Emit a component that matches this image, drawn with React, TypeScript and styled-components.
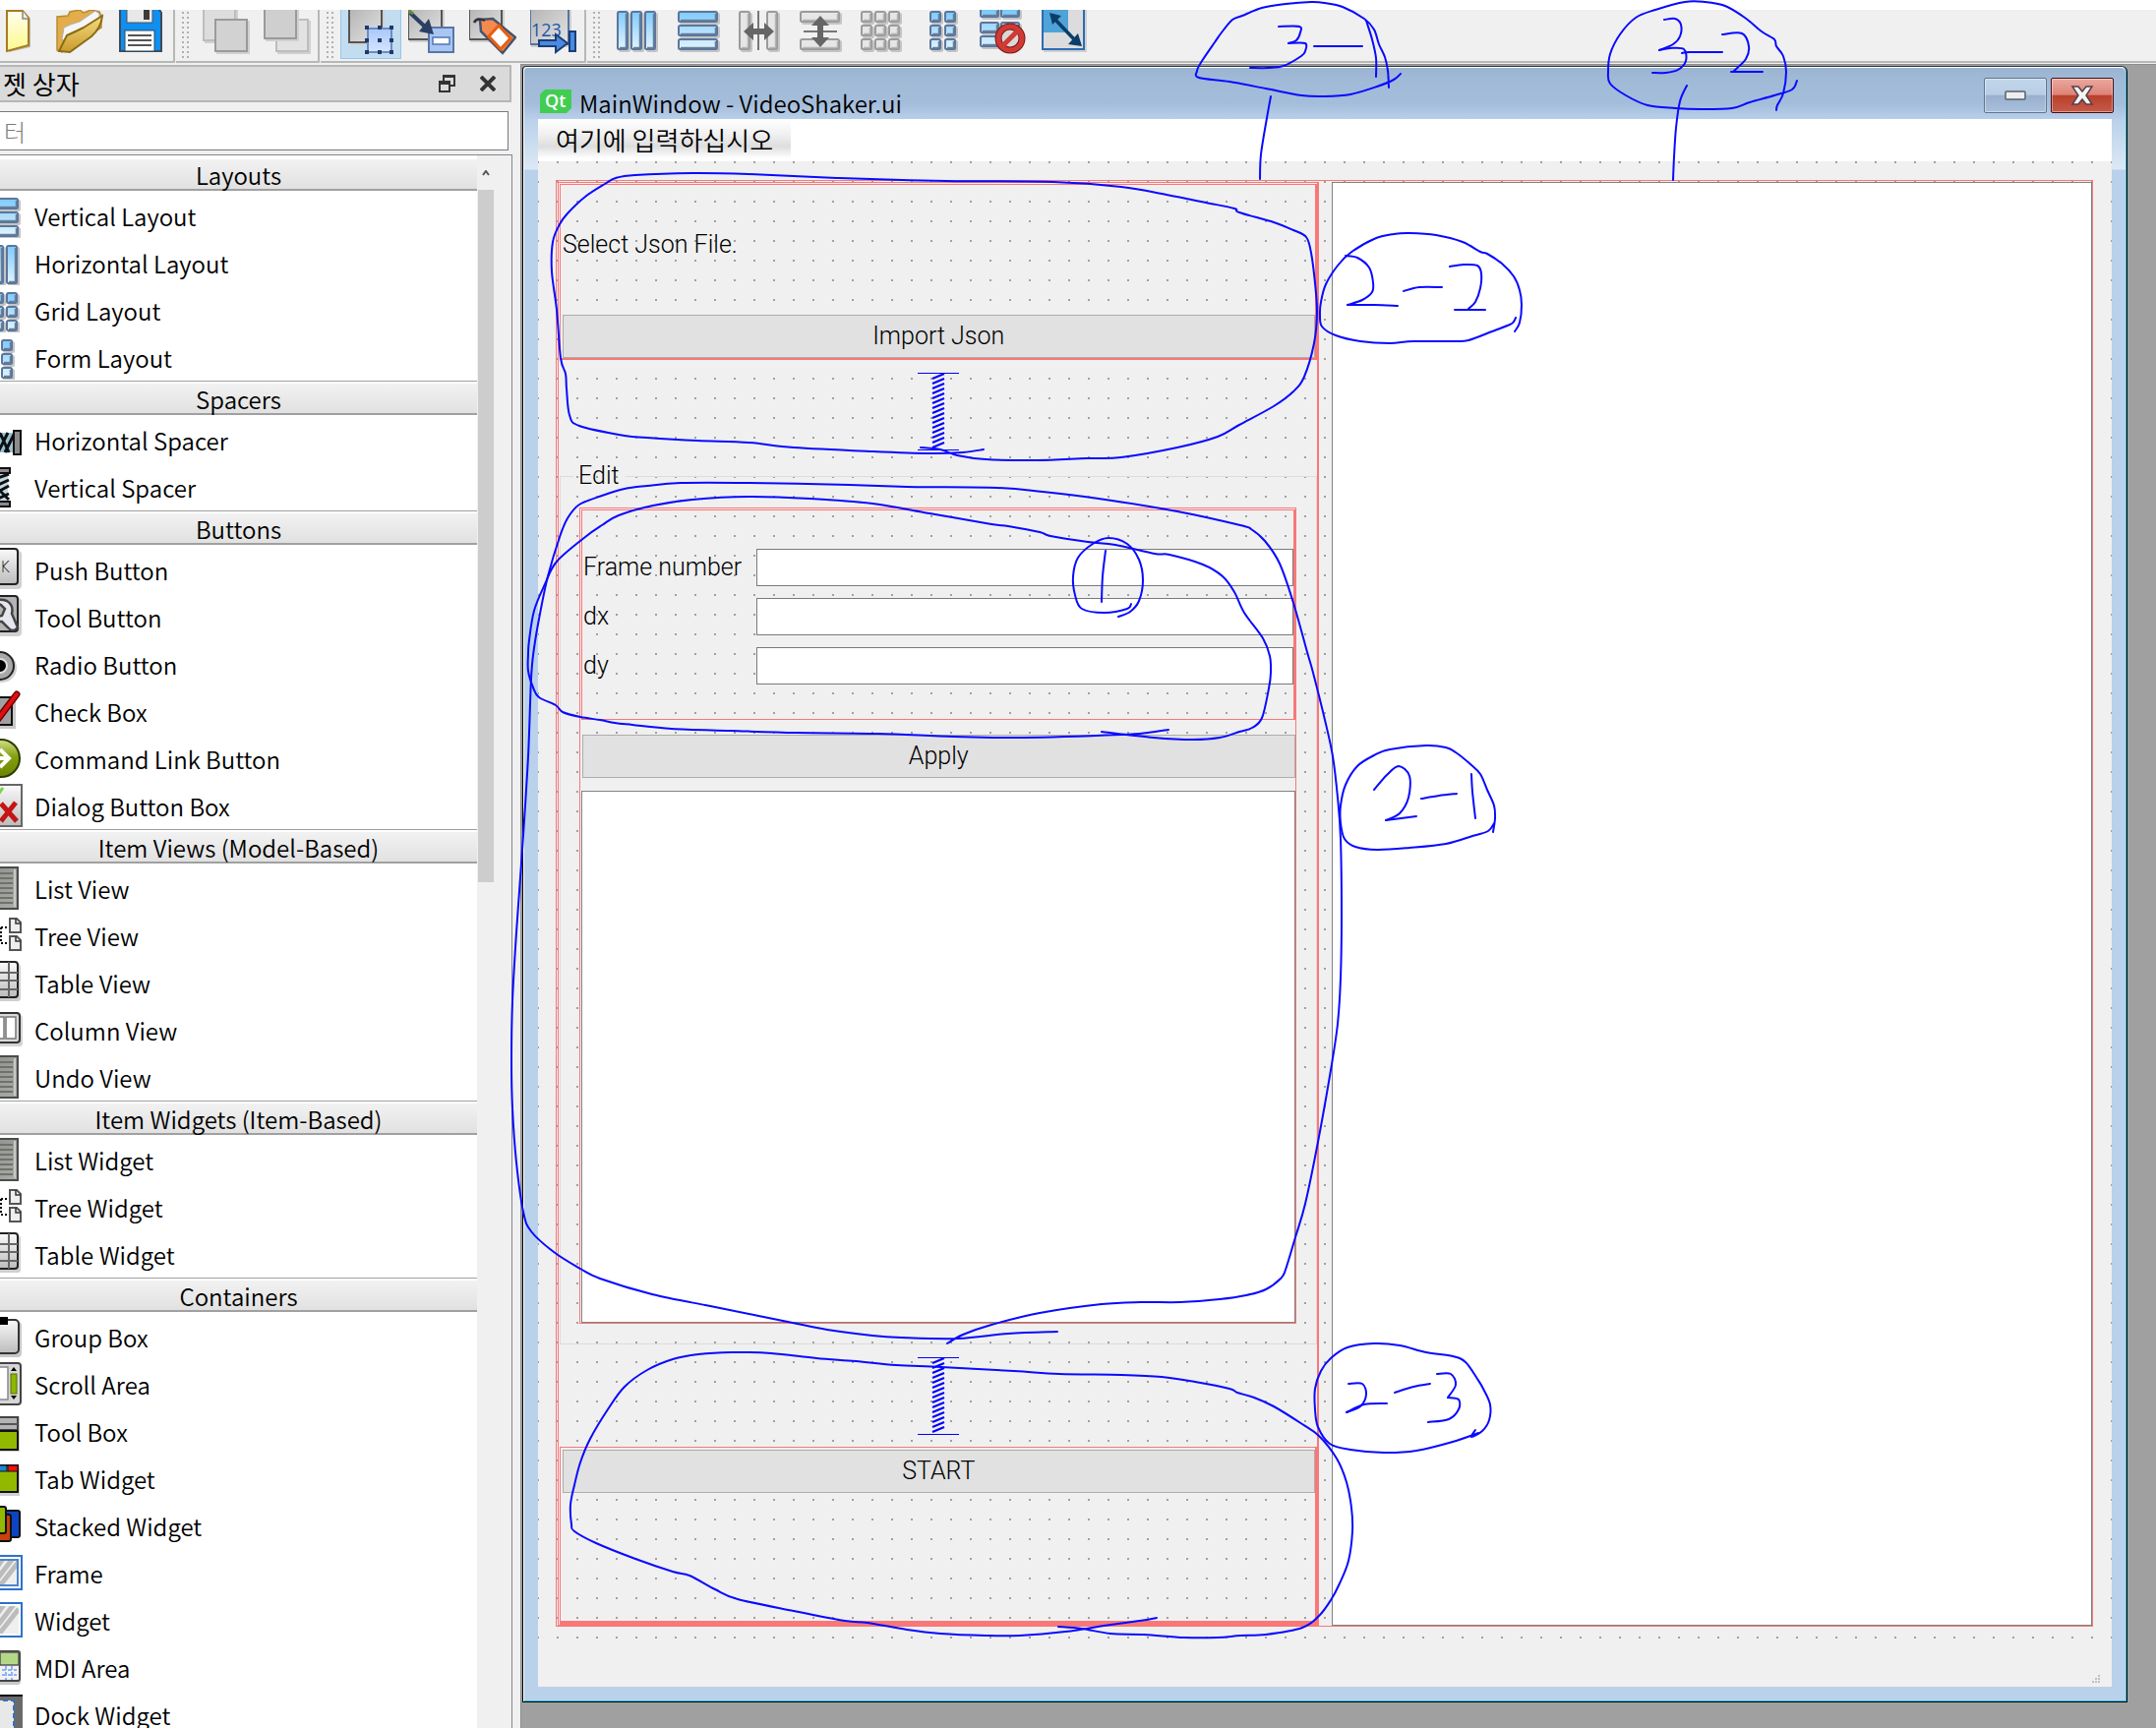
import React from "react";
import styled, { createGlobalStyle, css } from "styled-components";

const uiFont = '"Noto Sans CJK KR", "Noto Sans", sans-serif';
const formFont = 'Roboto, "Noto Sans CJK KR", sans-serif';
const guide = "#f87878";

const GlobalStyle = createGlobalStyle`
  *, *::before, *::after { box-sizing: border-box; }
  body { margin: 0; background: #fff; font-family: ${uiFont}; color: #000; }
  button, input, textarea { font: inherit; color: inherit; margin: 0; border-radius: 0; }
`;

/* ---------- shell ---------- */

const Page = styled.div`
  position: relative;
  display: flex;
  flex-direction: column;
  height: 100vh;
  padding-top: 10px;
  overflow: hidden;
`;

const Toolbars = styled.header`
  display: flex;
  flex: none;
  height: 54px;
  gap: 1px;
  background: #f0f0f0;
  overflow: hidden;
`;

const ToolGroup = styled.div<{ $first?: boolean; $last?: boolean }>`
  display: flex;
  align-items: flex-end;
  padding: 0 0 2px 6px;
  border: solid #b6b8b6;
  border-width: 0 2px 2px 0;
  ${(p) => p.$first && css`padding: 0 2px 2px 0; margin-left: -12px;`}
  ${(p) => p.$last && css`flex: 1; border-right: 0;`}
`;

const Grip = styled.span`
  width: 8px;
  height: 48px;
  margin-right: 6px;
  background: radial-gradient(circle at 1px 1px, #b0b0b0 1px, transparent 1px) 0 0 / 5px 5px;
`;

const ToolButton = styled.button<{ $on?: boolean }>`
  display: flex;
  justify-content: center;
  align-items: center;
  width: 62px;
  height: 56px;
  padding: 0;
  border: 1px solid ${(p) => (p.$on ? "#93c8f0" : "transparent")};
  background: ${(p) => (p.$on ? "#c2dcf0" : "transparent")};
`;

const Body = styled.div`
  display: flex;
  flex: 1;
  min-height: 0;
  background: #f0f0f0;
`;

/* ---------- widget box ---------- */

const Dock = styled.aside`
  display: flex;
  flex-direction: column;
  flex: none;
  width: 521px;
  margin-right: 8px;
  padding-top: 2px;
`;

const DockTitle = styled.div`
  display: flex;
  align-items: center;
  height: 38px;
  margin-right: 1px;
  padding: 0 12px 0 3px;
  border: 2px solid #b6b6b6;
  border-left: 0;
  background: #dadada;
  font-size: 26px;
  line-height: 36px;
`;

const DockName = styled.h2`
  flex: 1;
  margin: 0;
  font: inherit;
`;

const DockButton = styled.button`
  display: flex;
  justify-content: center;
  align-items: center;
  width: 20px;
  height: 24px;
  margin-left: 22px;
  padding: 0;
  border: 0;
  background: none;
`;

const Filter = styled.input`
  flex: none;
  width: 517px;
  height: 40px;
  margin: 9px 0 4px;
  padding: 0 4px;
  border: 1px solid #7a7a7a;
  border-left: 0;
  background: #fff;
  font-size: 24px;
  font-weight: 300;
  &::placeholder { color: #7c7c7c; opacity: 1; }
`;

const ListFrame = styled.div`
  display: flex;
  flex: 1;
  min-height: 0;
  border: solid #828790;
  border-width: 1px 1px 0 0;
  overflow: hidden;
`;

const List = styled.div`
  width: 485px;
  padding-top: 4px;
  background: #fff;
`;

const SectionTitle = styled.h3`
  height: 32px;
  margin: 0;
  border-bottom: 2px solid #a0a0a0;
  background: linear-gradient(#f2f2f2, #e1e1e1);
  font-size: 24px;
  font-weight: 350;
  line-height: 32px;
  text-align: center;
`;

const Items = styled.ul`
  margin: 0 0 2px;
  padding: 0 0 1px;
  border-bottom: 1px solid #a0a0a0;
  list-style: none;
`;

const Item = styled.li`
  display: flex;
  align-items: center;
  gap: 12px;
  height: 48px;
  margin-left: -25px;
  font-size: 24px;
  font-weight: 350;
  white-space: nowrap;
`;

const ItemText = styled.span`
  padding-top: 4px;
  line-height: 36px;
`;

const ScrollTrack = styled.div`
  display: flex;
  flex-direction: column;
  align-items: center;
  width: 16px;
  margin-left: 1px;
`;

const ScrollArrow = styled.div`
  display: flex;
  justify-content: center;
  align-items: center;
  height: 35px;
`;

const ScrollThumb = styled.div`
  width: 16px;
  height: 44%;
  background: #cdcdcd;
`;

/* ---------- document window ---------- */

const Mdi = styled.main`
  display: flex;
  flex: 1;
  margin-top: 1px;
  padding: 1px 29px 26px 1px;
  border: solid #8a8d94;
  border-width: 1px 0 0 1px;
  background: #a0a0a0;
`;

const Win = styled.section`
  display: flex;
  flex-direction: column;
  flex: 1;
  border: 1px solid #000;
  border-top-color: #2b3440;
  border-radius: 4px 6px 0 0;
  background: #b9d1ea;
  box-shadow: inset 1px 1px 0 #fff, inset -1px -1px 0 #2fc0e0;
`;

const TitleBar = styled.div`
  display: flex;
  flex: none;
  height: 52px;
  margin: 1px 1px 0 1px;
  padding: 10px 12px 0 16px;
  border-radius: 4px 6px 0 0;
  background: linear-gradient(#9ab4d2, #a0b9d7 20%, #a4bddb 70%, #b7cfe9);
`;

const TitleText = styled.h1`
  flex: 1;
  margin: 8px 0 0 8px;
  font-size: 24px;
  font-weight: 350;
  line-height: 36px;
`;

const LogoBox = styled.span`
  margin-top: 12px;
`;

const Caption = styled.button<{ $close?: boolean }>`
  display: flex;
  justify-content: center;
  align-items: center;
  width: 64px;
  height: 36px;
  margin-left: 4px;
  padding: 0;
  border: 1px solid ${(p) => (p.$close ? "#4a0c12" : "#5f7590")};
  border-radius: 2px;
  background: ${(p) =>
    p.$close
      ? "linear-gradient(#eba89e, #dd8377 48%, #b8402a 50%, #c65a48)"
      : "linear-gradient(#c2d6ea, #b8cde4 48%, #98b0ce 50%, #a8c0dc)"};
  box-shadow: inset 0 0 0 1px rgba(255, 255, 255, 0.4);
`;

const Frame = styled.div`
  display: flex;
  flex: 1;
  min-height: 0;
  margin: 0 1px 1px;
  padding: 0 14px 14px;
  background: linear-gradient(#b9d1ea, #dce8f5 51px, #b9d1ea 52px);
`;

const Client = styled.div`
  display: flex;
  flex-direction: column;
  flex: 1;
  background: #f0f0f0;
`;

const MenuBar = styled.nav`
  display: flex;
  flex: none;
  align-items: flex-start;
  height: 43px;
  background: #fff;
`;

const MenuEntry = styled.button`
  height: 40px;
  padding: 0 18px;
  border: 0;
  background: linear-gradient(#fff, #f0f0f0 40%, #dedede 70%, #fff);
  font-size: 26px;
  font-weight: 350;
  line-height: 42px;
`;

const Canvas = styled.div`
  display: flex;
  flex: 1;
  min-height: 0;
  padding: 19px 19px 21px 18px;
  background:
    linear-gradient(transparent 2px, #f0f0f0 2px) 0 0 / 20px 20px,
    linear-gradient(90deg, #a0a0a0 2px, #f0f0f0 2px) -1px 0 / 20px 20px;
`;

const StatusBar = styled.footer`
  display: flex;
  flex: none;
  justify-content: flex-end;
  align-items: flex-end;
  height: 40px;
  padding: 0 12px 4px 0;
`;

const SideBySide = styled.div`
  display: grid;
  grid-template-columns: 1fr 1fr;
  flex: 1;
  gap: 13px;
  padding: 1px 0 0 1px;
  border: 1px solid ${guide};
`;

const Column = styled.div`
  display: flex;
  flex-direction: column;
  padding: 1px 0 0 1px;
  border: 1px solid ${guide};
  border-right-width: 2px;
`;

const Block = styled.div<{ $tall?: boolean }>`
  display: flex;
  flex-direction: column;
  flex: none;
  height: ${(p) => (p.$tall ? 181 : 179)}px;
  padding: 2px 0 0 2px;
  border: solid ${guide};
  border-width: ${(p) => (p.$tall ? "1px 2px 4px 1px" : "1px 2px 2px 1px")};
`;

const Prompt = styled.p`
  display: flex;
  align-items: center;
  flex: 1;
  margin: 0 0 12px;
  font: 300 25px/30px ${formFont};
`;

const PushButton = styled.button`
  flex: none;
  height: 44px;
  padding: 0;
  border: 1px solid #adadad;
  background: #e1e1e1;
  font: 300 25px/30px ${formFont};
`;

const SpacerBox = styled.div`
  display: flex;
  justify-content: center;
  flex: none;
  padding: 13px 0 12px;
`;

const Group = styled.fieldset`
  display: flex;
  flex-direction: column;
  flex: 1;
  min-height: 0;
  min-width: 0;
  margin: 0;
  padding: 18px 20px 20px 19px;
  border: 1px solid #dcdcdc;
`;

const GroupTitle = styled.legend`
  margin-left: -6px;
  padding: 0 6px 0 5px;
  font: 300 25px/28px ${formFont};
`;

const GroupLayout = styled.div`
  display: flex;
  flex-direction: column;
  flex: 1;
  border: 1px solid ${guide};
`;

const Fields = styled.div`
  display: grid;
  grid-template-columns: 176px 1fr;
  row-gap: 12px;
  align-items: center;
  margin: 1px 0 15px 1px;
  padding: 39px 0 35px 1px;
  border: solid ${guide};
  border-width: 1px 2px 1px 1px;
  font: 300 25px/30px ${formFont};
`;

const Field = styled.input`
  width: 100%;
  height: 38px;
  padding: 0 6px;
  border: 1px solid #7a7a7a;
  background: #fff;
`;

const Editor = styled.textarea<{ $boxed?: boolean }>`
  flex: 1;
  display: block;
  min-width: 0;
  margin: ${(p) => (p.$boxed ? "13px 0 0 1px" : "0")};
  padding: 4px;
  border: 1px solid #828282;
  background: #fff;
  outline: 0;
  resize: none;
`;

const WideButton = styled(PushButton)`
  margin: 0 0 0 2px;
`;

const Ink = styled.svg`
  position: absolute;
  top: 0;
  left: 0;
  pointer-events: none;
  fill: none;
  stroke: #0a0aff;
  stroke-width: 2;
  stroke-linecap: round;
  stroke-linejoin: round;
`;

const SharedPaints = styled.svg`
  position: absolute;
`;

/* ---------- icons ---------- */

const Svg48 = ({ children }: { children: React.ReactNode }) => (
  <svg width="48" height="48" viewBox="0 0 48 48" aria-hidden="true">
    {children}
  </svg>
);

const Defs = () => (
  <SharedPaints width="0" height="0" aria-hidden="true">
    <defs>
      <linearGradient id="blue" x1="0" y1="0" x2="0" y2="48" gradientUnits="userSpaceOnUse">
        <stop offset="0" stopColor="#74c6fb" />
        <stop offset="1" stopColor="#f2faff" />
      </linearGradient>
      <linearGradient id="grey" x1="0" y1="0" x2="1" y2="1">
        <stop offset="0" stopColor="#b4b4b4" />
        <stop offset="1" stopColor="#e4e4e4" />
      </linearGradient>
      <linearGradient id="light" x1="0" y1="0" x2="0" y2="1">
        <stop offset="0" stopColor="#fafafa" />
        <stop offset="1" stopColor="#bcbcbc" />
      </linearGradient>
      <linearGradient id="list" x1="0" y1="0" x2="1" y2="1">
        <stop offset="0" stopColor="#8b8d88" />
        <stop offset="1" stopColor="#a9aba6" />
      </linearGradient>
      <linearGradient id="sky" x1="0" y1="0" x2="0" y2="1">
        <stop offset="0" stopColor="#a9c8f8" />
        <stop offset="1" stopColor="#d6e4ff" />
      </linearGradient>
      <linearGradient id="paper" x1="0" y1="0" x2="0" y2="1">
        <stop offset="0" stopColor="#fffdf0" />
        <stop offset="1" stopColor="#fdf98c" />
      </linearGradient>
      <linearGradient id="gold" x1="0" y1="0" x2="0" y2="1">
        <stop offset="0" stopColor="#f5dc80" />
        <stop offset="1" stopColor="#c89a2c" />
      </linearGradient>
      <linearGradient id="green" x1="0" y1="0" x2="0" y2="1">
        <stop offset="0" stopColor="#d3e08a" />
        <stop offset="0.45" stopColor="#84a010" />
        <stop offset="1" stopColor="#6c8400" />
      </linearGradient>
    </defs>
  </SharedPaints>
);

type Cell = [number, number, number, number];
const Cells = ({ cells, muted }: { cells: Cell[]; muted?: boolean }) => (
  <>
    {cells.map(([x, y, w, h], i) => (
      <g key={i}>
        <rect x={x + 2} y={y + 2} width={w} height={h} rx="2" fill="#c4c4c4" />
        <rect x={x + 1} y={y + 1} width={w - 2} height={h - 2} rx="1.5" fill={muted ? "#e6e6e6" : "url(#blue)"} stroke={muted ? "#9b9b9b" : "#5c769c"} strokeWidth="2" />
        <path d={`M${x + w - 2.5} ${y + 3}V${y + h - 2.5}H${x + 3}`} fill="none" stroke={muted ? "#b4b4b4" : "#64809b"} strokeWidth="1.5" />
      </g>
    ))}
  </>
);

const rows: Cell[] = [[3, 3, 41, 12], [3, 17, 41, 12], [3, 31, 41, 12]];
const cols: Cell[] = [[3, 3, 12, 40], [17, 3, 12, 40], [31, 3, 12, 40]];
const grid: Cell[] = [3, 17, 31].flatMap((x) => [3, 17, 31].map((y): Cell => [x, y, 12, 12]));
const form: Cell[] = [11, 26].flatMap((x) => [3, 17, 31].map((y): Cell => [x, y, 12, 12]));

const Plate = ({ x, y, w = 32, h = 34, fill = "url(#grey)", stroke = "#555" }: { x: number; y: number; w?: number; h?: number; fill?: string; stroke?: string }) => (
  <>
    <rect x={x + 2} y={y + 2} width={w} height={h} fill="#d0d0d0" />
    <rect x={x + 1} y={y + 1} width={w - 2} height={h - 2} fill={fill} stroke={stroke} strokeWidth="2" />
  </>
);

const tools: Record<string, React.ReactNode> = {
  new: (
    <>
      <path d="M13 5H30L36 11V40L14 45Z" fill="#b8b8b8" />
      <path d="M12 3H28L34 10V38L12 44Z" fill="url(#paper)" stroke="#a67c1e" strokeWidth="2" />
      <path d="M28 3V11H34" fill="#eee" stroke="#888" strokeWidth="1.5" />
    </>
  ),
  open: (
    <>
      <path d="M1 9L12 8 14 4 24 2 28 5 36 2 44 4 46 8V20L6 45 1 43Z" fill="#e2ad4a" stroke="#b98a30" strokeWidth="1.5" />
      <path d="M6 32L8 20Q16 16 24 14L40 3 44 6V14L10 34Z" fill="#f6f6f6" stroke="#b0b0b0" />
      <path d="M3 44L11 28Q20 24 28 20L47 8Q46 20 36 29L14 45Z" fill="url(#gold)" stroke="#8a6b16" strokeWidth="2" />
    </>
  ),
  save: (
    <>
      <path d="M3 0H42L45 5V44H3Z" fill="#0f8ff0" stroke="#3f4b58" strokeWidth="2" />
      <rect x="10" y="0" width="26" height="15" fill="#e8e8e8" stroke="#555" strokeWidth="1" />
      <rect x="27" y="1" width="6" height="11" fill="#3b3b3b" />
      <rect x="8" y="23" width="30" height="21" fill="#fff" stroke="#2b4a63" strokeWidth="1" />
      <path d="M11 28H35M11 33H35M11 38H35" stroke="#555" strokeWidth="2" />
    </>
  ),
  back: (
    <>
      <Plate x={0} y={0} w={34} h={34} fill="#ddd" stroke="#bdbdbd" />
      <Plate x={12} y={11} w={34} h={34} fill="#d2d2d2" stroke="#9a9a9a" />
    </>
  ),
  front: (
    <>
      <Plate x={12} y={11} w={34} h={34} fill="#e2e2e2" stroke="#bdbdbd" />
      <Plate x={0} y={-2} w={34} h={34} fill="#cfcfcf" stroke="#9a9a9a" />
    </>
  ),
  widgets: (
    <>
      <Plate x={1} y={0} w={35} h={36} />
      <rect x="21" y="21" width="24" height="24" fill="url(#sky)" stroke="#6c8cc4" strokeWidth="2" />
      {[[18, 18], [31, 18], [43, 18], [18, 31], [31, 31], [43, 31], [18, 43], [31, 43], [43, 43]].map(([x, y]) => (
        <rect key={`${x}-${y}`} x={x} y={y} width="4" height="4" fill="#1d3a6b" />
      ))}
    </>
  ),
  signals: (
    <>
      <Plate x={-1} y={-1} w={36} h={34} />
      <rect x="21" y="20" width="25" height="25" fill="#a9c6f2" stroke="#5677a8" strokeWidth="2" />
      <rect x="25" y="30" width="17" height="7" fill="#fff" stroke="#4d78b8" strokeWidth="1.5" />
      <path d="M2 5L18 20" stroke="#2b3f63" strokeWidth="4" />
      <path d="M26 27L11 24 21 11Z" fill="#2b3f63" />
      <path d="M0 2L5 6" stroke="#6a8a3a" strokeWidth="3" />
    </>
  ),
  buddies: (
    <>
      <Plate x={-1} y={-1} w={35} h={34} />
      <path d="M11 12L24 11 47 30 34 46 12 24Z" fill="#f58a4e" stroke="#45536e" strokeWidth="2.5" />
      <path d="M30 18L42 31 32 42 20 29Z" fill="#fff" stroke="#e85e10" strokeWidth="3" />
      <path d="M5 15Q8 9 16 13" fill="none" stroke="#333" strokeWidth="2.5" />
    </>
  ),
  tabs: (
    <>
      <Plate x={-1} y={-2} w={41} h={40} stroke="#5874a0" />
      <text x="1" y="29" fontFamily="Open Sans, sans-serif" fontSize="18" fill="#1b56a8">123</text>
      <path d="M9 33H26V27L38 36 26 45V39H9Z" fill="#4a8ae0" stroke="#1c3e75" strokeWidth="2" />
      <rect x="40" y="24" width="6" height="20" fill="#4a8ae0" stroke="#1c3e75" strokeWidth="2" />
    </>
  ),
  cols: <Cells cells={cols} />,
  rows: <Cells cells={rows} />,
  hsplit: (
    <>
      <Cells muted cells={[[3, 3, 12, 40], [31, 3, 12, 40]]} />
      <path d="M23 3V43" stroke="#777" strokeWidth="2" />
      <path d="M8 24L18 15V21H29V15L39 24 29 33V27H18V33Z" fill="#666" />
    </>
  ),
  vsplit: (
    <>
      <Cells muted cells={[[3, 3, 41, 12], [3, 31, 41, 12]]} />
      <path d="M7 24H41" stroke="#777" strokeWidth="2" />
      <path d="M24 8L33 18H27V30H33L24 40 15 30H21V18H15Z" fill="#666" />
    </>
  ),
  grid: <Cells muted cells={grid} />,
  form: <Cells cells={form} />,
  broken: (
    <>
      <Cells cells={[[0, 0, 20, 10], [21, 0, 20, 10], [0, 14, 20, 12], [21, 14, 20, 12], [0, 28, 20, 12]]} />
      <circle cx="31" cy="31" r="12" fill="#d9d9d9" stroke="#7c1614" strokeWidth="7" />
      <circle cx="31" cy="31" r="12" fill="none" stroke="#cf3b34" strokeWidth="5" />
      <path d="M23 39L39 23" stroke="#cf3b34" strokeWidth="5" />
    </>
  ),
  adjust: (
    <>
      <Plate x={1} y={-2} w={44} h={45} fill="#dcdcdc" stroke="#2d6cb4" />
      <rect x="3" y="0" width="25" height="25" fill="#4fa3d6" />
      <path d="M14 11L36 34" stroke="#0b3d6b" strokeWidth="3.5" />
      <path d="M9 5L21 8 12 17ZM42 39L28 37 38 26Z" fill="#0b3d6b" />
    </>
  ),
};

const listIcon = (
  <>
    <rect x="1" y="4" width="42" height="42" fill="url(#list)" stroke="#4c4c4c" strokeWidth="2" />
    <path d="M4 10H38M4 15H38M4 20H38M4 25H38M4 30H38M4 35H38M4 40H38" stroke="#6f716c" strokeWidth="2" />
    <path d="M40 6V44" stroke="#c8c8c4" strokeWidth="2" />
  </>
);
const treeIcon = (
  <>
    <path d="M26 17H32M26 17V33M26 33H32" fill="none" stroke="#000" strokeDasharray="2 2" strokeWidth="2" />
    <path d="M35 8H42L46 12V22H35ZM35 26H42L46 30V40H35Z" fill="#eee" stroke="#555" strokeWidth="2" />
    <path d="M41 8V13H46M41 26V31H46" fill="none" stroke="#333" strokeWidth="1.5" />
  </>
);
const tableIcon = (
  <>
    <rect x="4" y="6" width="42" height="38" rx="3" fill="#cfcfcf" />
    <rect x="2" y="4" width="41" height="36" rx="3" fill="url(#light)" stroke="#222" strokeWidth="2" />
    <path d="M2 15H43M2 23H43M2 32H43" stroke="#666" strokeWidth="2" />
    <path d="M34 4V40" stroke="#666" strokeWidth="2" />
  </>
);
const stripes = <path d="M14 42L40 8M22 42L44 14M6 42L30 8" stroke="#bcbcbc" strokeWidth="5" />;

const widgets: Record<string, React.ReactNode> = {
  vlayout: <g transform="translate(0 4)"><Cells cells={rows} /></g>,
  hlayout: <g transform="translate(0 4)"><Cells cells={cols} /></g>,
  glayout: <g transform="translate(0 4)"><Cells cells={grid} /></g>,
  flayout: <g transform="translate(0 4)"><Cells cells={form} /></g>,
  hspacer: (
    <>
      <rect x="10" y="18" width="30" height="20" fill="#9fc0cc" />
      <path d="M16 38L26 18M23 38L33 18M30 38L40 18M18 24L24 38M26 20L34 38" stroke="#0a1015" strokeWidth="3" />
      <rect x="39" y="16" width="7" height="24" fill="#8c8c8c" stroke="#111" strokeWidth="2" />
    </>
  ),
  vspacer: (
    <>
      <rect x="14" y="10" width="19" height="32" fill="#c4d8de" />
      <path d="M12 20L34 12M12 28L34 18M12 36L34 24M12 42L34 32M20 24L34 38" stroke="#0a1015" strokeWidth="3" />
      <path d="M10 6H35V11H10ZM10 40H35V45H10Z" fill="#8c8c8c" stroke="#111" strokeWidth="2" />
    </>
  ),
  push: (
    <>
      <rect x="4" y="6" width="43" height="39" rx="4" fill="#d0d0d0" />
      <rect x="2" y="4" width="41" height="36" rx="3" fill="url(#light)" stroke="#222" strokeWidth="2" />
      <text x="25" y="28" fontFamily="DejaVu Sans, sans-serif" fontSize="15" fill="#000">K</text>
    </>
  ),
  tool: (
    <>
      <rect x="4" y="6" width="43" height="39" rx="4" fill="#d0d0d0" />
      <rect x="2" y="4" width="41" height="36" rx="3" fill="#b4b4b4" stroke="#222" strokeWidth="2" />
      <path d="M18 10Q24 6 32 9Q39 13 37 22L43 36Q38 42 33 36L27 30Q20 30 18 26L27 24 30 17 26 13Z" fill="#e6e6ee" stroke="#444" strokeWidth="2.5" />
    </>
  ),
  radio: (
    <>
      <circle cx="27" cy="29" r="15" fill="#d0d0d0" />
      <circle cx="25" cy="27" r="14" fill="#a8a8a8" stroke="#222" strokeWidth="2" />
      <circle cx="25" cy="27" r="7" fill="#000" stroke="#ddd" strokeWidth="2" />
    </>
  ),
  check: (
    <>
      <rect x="10" y="13" width="31" height="30" fill="#c8c8c8" />
      <rect x="8" y="11" width="29" height="28" fill="#a0a0a0" stroke="#111" strokeWidth="2" />
      <path d="M15 24L23 33 42 8" fill="none" stroke="#6c0000" strokeWidth="7" strokeLinecap="round" />
      <path d="M15 24L23 33 42 8" fill="none" stroke="#e01010" strokeWidth="4" strokeLinecap="round" />
    </>
  ),
  command: (
    <>
      <circle cx="26" cy="25" r="19" fill="url(#green)" stroke="#2e3a00" strokeWidth="2" />
      <path d="M14 25H33M25 16L34 25 25 34" fill="none" stroke="#fff" strokeWidth="4" />
    </>
  ),
  dialog: (
    <>
      <rect x="3" y="4" width="44" height="42" fill="url(#light)" stroke="#666" strokeWidth="2" />
      <path d="M20 9L23 14 28 7" fill="none" stroke="#7ed04a" strokeWidth="3" />
      <path d="M26 23L42 41M41 22L26 41" stroke="#c41414" strokeWidth="5" />
    </>
  ),
  list: listIcon,
  tree: treeIcon,
  table: tableIcon,
  column: (
    <>
      <rect x="4" y="10" width="44" height="32" rx="3" fill="#d4d4d4" />
      <rect x="2" y="8" width="43" height="30" rx="3" fill="#d8d8d8" stroke="#333" strokeWidth="2" />
      <path d="M8 12H29V34H8ZM31 12H41V34H31Z" fill="#fff" stroke="#777" strokeWidth="1.5" />
    </>
  ),
  group: (
    <>
      <rect x="4" y="10" width="43" height="36" rx="4" fill="#c8c8c8" />
      <rect x="2" y="8" width="42" height="34" rx="4" fill="url(#light)" stroke="#333" strokeWidth="2" />
      <rect x="5" y="5" width="28" height="8" fill="#000" />
    </>
  ),
  scroll: (
    <>
      <rect x="2" y="4" width="44" height="42" rx="3" fill="#d6d6d6" stroke="#444" strokeWidth="2" />
      <rect x="6" y="8" width="27" height="33" fill="#fff" stroke="#888" strokeWidth="1.5" />
      <rect x="36" y="15" width="6" height="20" fill="#8db600" stroke="#55700a" />
      <path d="M36 12L39 8 42 12ZM36 37L39 41 42 37Z" fill="#000" />
    </>
  ),
  toolbox: (
    <>
      <rect x="4" y="10" width="41" height="36" fill="#d0d0d0" />
      <rect x="2" y="11" width="41" height="33" fill="#93b800" stroke="#111" strokeWidth="2" />
      <path d="M2 11H43V24H2Z" fill="#b4b4b4" stroke="#444" strokeWidth="2" />
      <path d="M2 18H43" stroke="#555" strokeWidth="2" />
      <path d="M2 25H43" stroke="#111" strokeWidth="2" />
    </>
  ),
  tab: (
    <>
      <rect x="4" y="14" width="41" height="29" fill="#d0d0d0" />
      <rect x="2" y="12" width="41" height="27" fill="#93b800" stroke="#111" strokeWidth="2" />
      <rect x="14" y="12" width="18" height="6" fill="#1c86dc" stroke="#111" />
      <rect x="33" y="12" width="10" height="6" fill="#f01010" stroke="#111" />
    </>
  ),
  stacked: (
    <>
      <rect x="20" y="10" width="25" height="27" rx="2" fill="#0e43c4" stroke="#111" strokeWidth="2" />
      <rect x="12" y="14" width="24" height="27" rx="2" fill="#c8400a" stroke="#111" strokeWidth="2" />
      <rect x="3" y="6" width="28" height="27" rx="2" fill="#93b800" stroke="#111" strokeWidth="2" />
    </>
  ),
  frame: (
    <>
      <rect x="4" y="8" width="43" height="34" fill="#efefef" />
      {stripes}
      <rect x="4" y="8" width="43" height="34" fill="none" stroke="#2d73c8" strokeWidth="2" />
      <rect x="8" y="12" width="35" height="26" fill="none" stroke="#4d86cc" strokeWidth="2" />
      <rect x="6" y="10" width="39" height="30" fill="none" stroke="#fff" strokeWidth="2" />
    </>
  ),
  widget: (
    <>
      <rect x="4" y="8" width="43" height="34" fill="#efefef" />
      {stripes}
      <rect x="6" y="10" width="39" height="30" fill="none" stroke="#fff" strokeWidth="2" />
      <rect x="4" y="8" width="43" height="34" fill="none" stroke="#2d73c8" strokeWidth="2" />
    </>
  ),
  mdi: (
    <>
      <rect x="10" y="11" width="36" height="32" rx="3" fill="#c8c8c8" />
      <rect x="8" y="9" width="37" height="30" rx="2" fill="#f2f2f2" stroke="#444" strokeWidth="2" />
      <path d="M25 10H44V23H25Z" fill="#b4d888" stroke="#555" strokeWidth="1.5" />
      <path d="M27 28H42M27 33H42M31 24V38M37 24V38" stroke="#8cb4f4" strokeWidth="2" strokeDasharray="4 2" />
    </>
  ),
  dock: (
    <>
      <path d="M2 6H48V48H2Z" fill="#6a6a6a" />
      <path d="M2 6H48" stroke="#111" strokeWidth="2" />
      <rect x="4" y="11" width="35" height="35" fill="#e8e8e8" stroke="#2d73c8" strokeWidth="2" strokeDasharray="5 3" />
    </>
  ),
};

const QtLogo = () => (
  <svg width="32" height="24" viewBox="0 0 32 24" role="img" aria-label="Qt">
    <path d="M5 0H32V19L27 24H0V5Z" fill="#41cd52" />
    <text x="5" y="18" fontFamily="Open Sans, sans-serif" fontSize="18" fontWeight="600" fill="#fff">Qt</text>
  </svg>
);

const VerticalSpring = () => (
  <svg width="42" height="79" viewBox="0 0 42 79" aria-hidden="true" stroke="#0000ff">
    <path d="M0 0.5H42M0 78.5H42" />
    {Array.from({ length: 15 }, (_, i) => (
      <path key={i} d={`M15 ${6 + i * 5}L27 ${1 + i * 5}`} strokeWidth="2" />
    ))}
  </svg>
);

const SizeGrip = () => (
  <svg width="8" height="8" viewBox="0 0 8 8" aria-hidden="true" fill="#bfbfbf">
    <path d="M6 0h2v2H6zM3 3h2v2H3zM6 3h2v2H6zM0 6h2v2H0zM3 6h2v2H3zM6 6h2v2H6z" />
  </svg>
);

/* ---------- pen notes ---------- */

const strokes: string[] = [
  "1000,457 979,460 945,461 887,459 807,455 761,450 709,448 658,445 635,443 589,433 579,422 576,395 575,380 570,364 566,315 561,276 562,246 569,228 577,217 595,200 615,187 626,181 646,178 704,176 761,177 853,181 962,184 1071,185 1140,190 1186,198 1226,206 1255,212 1260,216 1295,226 1315,234 1328,241 1333,257 1337,288 1339,318 1336,349 1326,383 1315,398 1295,413 1260,432 1238,444 1197,455 1140,465 1105,466 1054,468 1002,467 973,463 956,457 936,455",
  "1188,742 1167,745 1140,747 1040,750 970,749 893,746 810,745 743,743 683,741 643,737 625,735 610,732 590,729 572,724 565,717 548,709 542,699 537,682 537,665 538,651 543,621 554,594 566,571 595,546 612,534 629,524 664,514 704,508 761,505 824,507 887,512 945,522 1008,533 1025,535 1057,541 1068,545 1106,551 1134,554 1174,563 1189,564 1223,574 1243,586 1255,602 1265,623 1284,649 1291,667 1292,684 1290,700 1283,730 1273,740 1260,744 1240,750 1213,752 1173,750 1120,744",
  "1075,1354 1025,1356 974,1361 916,1360 887,1358 841,1352 801,1344 732,1330 717,1327 663,1316 610,1300 590,1290 563,1273 540,1252 532,1232 525,1182 521,1127 520,1078 521,1018 525,948 531,864 537,769 540,690 543,659 549,624 557,586 569,546 577,527 589,513 612,504 635,497 658,494 692,491 761,491 864,493 922,495 1014,496 1060,500 1117,507 1197,520 1261,534 1272,538 1286,550 1301,573 1315,613 1329,663 1335,684 1347,732 1355,769 1360,811 1363,853 1364,931 1363,994 1360,1041 1353,1088 1340,1161 1327,1224 1317,1258 1307,1291 1302,1300 1287,1311 1267,1317 1240,1321 1200,1324 1160,1324 1120,1326 1057,1335 1008,1347 979,1357 963,1366",
  "1176,1645 1166,1647 1129,1652 1083,1659 1037,1663 1002,1663 956,1661 922,1657 882,1650 859,1648 807,1638 750,1626 727,1616 701,1602 684,1598 646,1585 606,1569 584,1557 581,1550 580,1530 584,1510 590,1487 600,1463 618,1433 635,1410 658,1393 684,1382 710,1377 744,1375 784,1376 830,1381 870,1384 911,1388 957,1390 1031,1394 1077,1397 1140,1398 1181,1400 1215,1405 1250,1412 1258,1416 1275,1421 1295,1430 1324,1448 1341,1460 1359,1483 1369,1507 1374,1533 1375,1557 1371,1587 1362,1610 1353,1627 1341,1643 1324,1655 1287,1662 1261,1663 1238,1665 1204,1665 1163,1662 1129,1661 1100,1656 1076,1654",
  "1424,75 1417,81 1400,88 1373,96 1347,98 1323,97 1287,90 1250,83 1219,79 1217,72 1222,62 1235,43 1242,33 1253,20 1263,16 1283,8 1307,4 1333,2 1347,3 1365,7 1387,19 1397,30 1402,45 1408,58 1411,72 1412,89",
  "1300,27 1321,27 1322,33 1318,41 1310,44",
  "1310,44 1327,44 1327,52 1323,57 1305,67 1290,69 1271,69",
  "1336,47 1385,47",
  "1389,21 1395,40 1399,59 1399,78",
  "1292,98 1288,120 1282,157 1281,182",
  "1540,337 1545,328 1547,310 1545,295 1539,281 1527,268 1512,258 1505,256 1487,246 1460,239 1433,237 1417,238 1397,243 1373,257 1360,270 1348,289 1343,307 1342,320 1344,332 1358,341 1383,347 1413,349 1437,347 1477,347 1493,346 1517,337 1535,330 1539,327 1541,323",
  "1368,260 1380,262 1392,272 1396,287 1395,297 1385,305 1370,310",
  "1370,310 1397,310 1421,311",
  "1427,296 1443,292 1466,292",
  "1474,271 1488,269 1502,270 1506,278 1505,293 1500,307 1493,314",
  "1479,315 1510,315",
  "1806,112 1807,107 1813,95 1816,73 1813,57 1806,47 1804,40 1791,32 1774,18 1754,6 1733,2 1713,2 1683,10 1663,18 1647,35 1637,55 1635,73 1637,85 1653,97 1675,107 1703,110 1728,111 1761,110 1779,104 1804,97 1822,91 1827,82",
  "1692,20 1703,19 1709,25 1708,37 1701,45 1687,51",
  "1687,51 1698,49 1712,50 1714,62 1706,71 1693,74 1680,74",
  "1710,54 1718,53 1751,53",
  "1751,35 1771,34 1778,47 1775,60 1763,72",
  "1760,73 1792,73",
  "1715,87 1708,103 1704,130 1702,160 1701,183",
  "1518,846 1520,832 1519,819 1512,803 1505,787 1495,777 1480,765 1470,760 1450,758 1413,762 1397,768 1380,779 1368,798 1363,819 1363,837 1367,853 1378,861 1400,864 1433,862 1470,858 1497,850 1513,845 1519,837",
  "1397,803 1410,788 1422,779 1433,789 1432,811 1423,827 1409,834",
  "1409,834 1440,830",
  "1445,812 1463,809 1481,807",
  "1496,787 1497,805 1500,832",
  "1500,1454 1496,1461 1507,1455 1514,1444 1515,1428 1508,1412 1502,1402 1490,1385 1477,1379 1450,1375 1423,1368 1397,1366 1370,1370 1353,1381 1343,1394 1337,1412 1337,1433 1340,1451 1352,1468 1373,1474 1407,1477 1440,1475 1477,1466 1503,1457",
  "1371,1407 1385,1407 1389,1418 1383,1430 1369,1436",
  "1369,1436 1387,1428 1410,1427",
  "1418,1416 1437,1410 1454,1407",
  "1461,1397 1475,1397 1480,1408 1472,1421",
  "1472,1421 1483,1423 1483,1433 1473,1443 1452,1446",
  "1150,614 1146,619 1123,623 1100,619 1093,605 1091,586 1096,567 1111,553 1127,547 1146,553 1158,569 1162,590 1158,611 1149,622 1137,627",
  "1124,560 1121,586 1120,612",
];

/* Joins the sampled pen points with a Catmull-Rom curve. */
const smooth = (points: string) => {
  const p = points.split(" ").map((s) => s.split(",").map(Number));
  let d = `M${p[0][0]} ${p[0][1]}`;
  for (let i = 0; i < p.length - 1; i++) {
    const a = p[Math.max(i - 1, 0)];
    const b = p[i];
    const c = p[i + 1];
    const e = p[Math.min(i + 2, p.length - 1)];
    d += `C${b[0] + (c[0] - a[0]) / 6} ${b[1] + (c[1] - a[1]) / 6} ${c[0] - (e[0] - b[0]) / 6} ${c[1] - (e[1] - b[1]) / 6} ${c[0]} ${c[1]}`;
  }
  return d;
};

/* ---------- data ---------- */

type Tool = [icon: string, label: string, on?: boolean];
const toolGroups: Tool[][] = [
  [["new", "New"], ["open", "Open"], ["save", "Save"]],
  [["back", "Send to Back"], ["front", "Bring to Front"]],
  [["widgets", "Edit Widgets", true], ["signals", "Edit Signals/Slots"], ["buddies", "Edit Buddies"], ["tabs", "Edit Tab Order"]],
  [["cols", "Lay Out Horizontally"], ["rows", "Lay Out Vertically"], ["hsplit", "Horizontal Splitter"], ["vsplit", "Vertical Splitter"], ["grid", "Lay Out in a Grid"], ["form", "Lay Out in a Form"], ["broken", "Break Layout"], ["adjust", "Adjust Size"]],
];

const sections: { title: string; items: [string, string][] }[] = [
  { title: "Layouts", items: [["vlayout", "Vertical Layout"], ["hlayout", "Horizontal Layout"], ["glayout", "Grid Layout"], ["flayout", "Form Layout"]] },
  { title: "Spacers", items: [["hspacer", "Horizontal Spacer"], ["vspacer", "Vertical Spacer"]] },
  { title: "Buttons", items: [["push", "Push Button"], ["tool", "Tool Button"], ["radio", "Radio Button"], ["check", "Check Box"], ["command", "Command Link Button"], ["dialog", "Dialog Button Box"]] },
  { title: "Item Views (Model-Based)", items: [["list", "List View"], ["tree", "Tree View"], ["table", "Table View"], ["column", "Column View"], ["list", "Undo View"]] },
  { title: "Item Widgets (Item-Based)", items: [["list", "List Widget"], ["tree", "Tree Widget"], ["table", "Table Widget"]] },
  { title: "Containers", items: [["group", "Group Box"], ["scroll", "Scroll Area"], ["toolbox", "Tool Box"], ["tab", "Tab Widget"], ["stacked", "Stacked Widget"], ["frame", "Frame"], ["widget", "Widget"], ["mdi", "MDI Area"], ["dock", "Dock Widget"]] },
];

const fields = [
  { id: "frame", label: "Frame number" },
  { id: "dx", label: "dx" },
  { id: "dy", label: "dy" },
];

export default function App() {
  return (
    <Page>
      <GlobalStyle />
      <Defs />
      <Toolbars>
        {toolGroups.map((group, g) => (
          <ToolGroup key={g} $first={g === 0} $last={g === toolGroups.length - 1}>
            {g > 0 && <Grip />}
            {group.map(([icon, label, on]) => (
              <ToolButton key={icon} type="button" aria-label={label} $on={on}>
                <Svg48>{tools[icon]}</Svg48>
              </ToolButton>
            ))}
          </ToolGroup>
        ))}
      </Toolbars>
      <Body>
        <Dock>
          <DockTitle>
            <DockName>젯 상자</DockName>
            <DockButton type="button" aria-label="Float">
              <svg width="17" height="19" viewBox="0 0 17 19" fill="none" stroke="#333" strokeWidth="2">
                <path d="M5 6V1H16V11H12M5 2H16" />
                <path d="M1 7H11V17H1ZM1 9H11" />
              </svg>
            </DockButton>
            <DockButton type="button" aria-label="Close panel">
              <svg width="16" height="16" viewBox="0 0 16 16" stroke="#333" strokeWidth="4">
                <path d="M1 1L15 15M15 1L1 15" />
              </svg>
            </DockButton>
          </DockTitle>
          <Filter aria-label="Filter" placeholder="터" />
          <ListFrame>
            <List>
              {sections.map((s) => (
                <React.Fragment key={s.title}>
                  <SectionTitle>{s.title}</SectionTitle>
                  <Items>
                    {s.items.map(([icon, text]) => (
                      <Item key={text}>
                        <Svg48>{widgets[icon]}</Svg48>
                        <ItemText>{text}</ItemText>
                      </Item>
                    ))}
                  </Items>
                </React.Fragment>
              ))}
            </List>
            <ScrollTrack>
              <ScrollArrow>
                <svg width="8" height="6" viewBox="0 0 8 6" fill="none" stroke="#555" strokeWidth="2">
                  <path d="M1 5L4 1 7 5" />
                </svg>
              </ScrollArrow>
              <ScrollThumb />
            </ScrollTrack>
          </ListFrame>
        </Dock>
        <Mdi>
          <Win>
            <TitleBar>
              <LogoBox><QtLogo /></LogoBox>
              <TitleText>MainWindow - VideoShaker.ui</TitleText>
              <Caption type="button" aria-label="Minimize">
                <svg width="22" height="10" viewBox="0 0 22 10">
                  <rect x="1" y="1" width="20" height="8" rx="1" fill="#eee" stroke="#55606e" strokeWidth="1.5" />
                </svg>
              </Caption>
              <Caption type="button" aria-label="Close" $close>
                <svg width="24" height="20" viewBox="0 0 24 20">
                  <path d="M2 1H8L12 6 16 1H22L16 10 22 19H16L12 14 8 19H2L8 10Z" fill="#f4f4f4" stroke="#55404c" strokeWidth="1.5" />
                </svg>
              </Caption>
            </TitleBar>
            <Frame>
              <Client>
                <MenuBar>
                  <MenuEntry type="button">여기에 입력하십시오</MenuEntry>
                </MenuBar>
                <Canvas>
                  <SideBySide>
                    <Column>
                      <Block>
                        <Prompt>Select Json File.</Prompt>
                        <PushButton type="button">Import Json</PushButton>
                      </Block>
                      <SpacerBox><VerticalSpring /></SpacerBox>
                      <Group>
                        <GroupTitle>Edit</GroupTitle>
                        <GroupLayout>
                          <Fields>
                            {fields.map((f) => (
                              <React.Fragment key={f.id}>
                                <label htmlFor={f.id}>{f.label}</label>
                                <Field id={f.id} type="text" />
                              </React.Fragment>
                            ))}
                          </Fields>
                          <WideButton type="button">Apply</WideButton>
                          <Editor $boxed aria-label="Edits" />
                        </GroupLayout>
                      </Group>
                      <SpacerBox><VerticalSpring /></SpacerBox>
                      <Block $tall>
                        <PushButton type="button">START</PushButton>
                      </Block>
                    </Column>
                    <Editor aria-label="Output" />
                  </SideBySide>
                </Canvas>
                <StatusBar><SizeGrip /></StatusBar>
              </Client>
            </Frame>
          </Win>
        </Mdi>
      </Body>
      <Ink width="2192" height="1757" viewBox="0 0 2192 1757" aria-hidden="true">
        {strokes.map((s) => (
          <path key={s} d={smooth(s)} />
        ))}
      </Ink>
    </Page>
  );
}
